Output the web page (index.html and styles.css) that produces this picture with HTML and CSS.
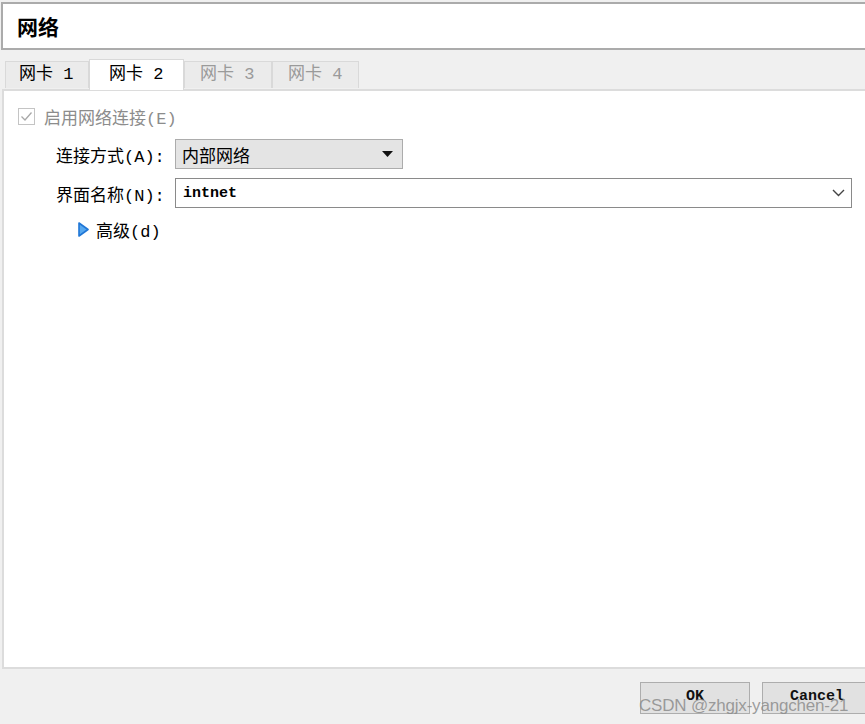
FILE: index.html
```html
<!DOCTYPE html>
<html lang="zh">
<head>
<meta charset="utf-8">
<title>网络</title>
<link rel="stylesheet" href="styles.css">
</head>
<body>
<div class="window">
  <div class="title">网络</div>
  <div class="tabs">
    <div class="tab">网卡 1</div>
    <div class="tab active">网卡 2</div>
    <div class="tab disabled">网卡 3</div>
    <div class="tab disabled">网卡 4</div>
  </div>
  <div class="panel">
    <div class="check-row">
      <span class="checkbox">
        <svg width="17" height="17" viewBox="0 0 17 17"><rect x="0.5" y="0.5" width="16" height="16" fill="#fff" stroke="#c4c4c4"/><path d="M3.5 8.5 L7 12 L13.5 4.5" fill="none" stroke="#a8a8a8" stroke-width="1.3"/></svg>
      </span>
      <span class="check-label">启用网络连接(E)</span>
    </div>
    <div class="form">
      <label class="lbl">连接方式(A):</label>
      <div class="combo">
        <span class="combo-text">内部网络</span>
        <svg class="combo-arrow" width="11" height="6" viewBox="0 0 11 6"><path d="M0 0 H11 L5.5 6 Z" fill="#111"/></svg>
      </div>
      <label class="lbl">界面名称(N):</label>
      <div class="input">
        <span class="input-text">intnet</span>
        <svg class="chev" width="13" height="8" viewBox="0 0 13 8"><path d="M1 1 L6.5 6.5 L12 1" fill="none" stroke="#444" stroke-width="1.4"/></svg>
      </div>
    </div>
    <div class="advanced">
      <svg width="11" height="15" viewBox="0 0 11 15"><path d="M1 1 L10 7.5 L1 14 Z" fill="#56a8f0" stroke="#1f76d6" stroke-width="1.6" stroke-linejoin="round"/></svg>
      <span class="adv-text">高级(d)</span>
    </div>
  </div>
  <div class="footer">
    <button class="btn">OK</button>
    <button class="btn last">Cancel</button>
  </div>
  <div class="watermark">CSDN @zhgjx-yangchen-21</div>
</div>
</body>
</html>
```
FILE: styles.css
```css
html, body {
  margin: 0;
  padding: 0;
  background: #f0f0f0;
  overflow: hidden;
}
.window {
  position: relative;
  width: 865px;
  height: 724px;
  font-family: "Liberation Mono", "Noto Sans CJK SC", monospace;
  color: #000;
}
.title {
  margin-top: 2px;
  margin-left: 1px;
  margin-right: -6px;
  height: 44px;
  border: 2px solid #ababab;
  background: #fff;
  display: flex;
  align-items: center;
  padding-left: 14px;
  font-family: "Noto Sans CJK SC", sans-serif;
  font-weight: bold;
  font-size: 21px;
}
.tabs {
  display: flex;
  align-items: flex-end;
  margin-top: 9px;
  padding-left: 5px;
  height: 30px;
  position: relative;
  z-index: 1;
}
.tab {
  box-sizing: border-box;
  height: 27px;
  width: 84px;
  border: 1px solid #d9d9d9;
  border-bottom: none;
  background: #ebebeb;
  font-size: 17px;
  line-height: 26px;
  padding-left: 13px;
  margin-bottom: 1px;
}
.tab.active {
  width: 95px;
  height: 31px;
  background: #fff;
  margin-bottom: -1px;
  line-height: 29px;
  padding-left: 19px;
  padding-bottom: 2px;
}
.tab.disabled {
  color: #9a9a9a;
  width: 88px;
  padding-left: 15px;
}
.tab.disabled + .tab.disabled {
  width: 87px;
}
.panel {
  box-sizing: border-box;
  margin-left: 2px;
  margin-right: -6px;
  height: 580px;
  background: #fff;
  border: 2px solid #dcdcdc;
  padding: 16px 0 0 14px;
}
.check-row {
  display: flex;
  align-items: center;
  height: 18px;
}
.checkbox {
  display: flex;
  width: 17px;
  height: 17px;
}
.check-label {
  margin-left: 9px;
  color: #8c8c8c;
  font-size: 17px;
}
.form {
  margin-top: 14px;
  margin-left: 38px;
  width: 796px;
  display: grid;
  grid-template-columns: 119px 1fr;
  row-gap: 9px;
  align-items: center;
}
.lbl {
  font-size: 17px;
}
.combo {
  box-sizing: border-box;
  width: 228px;
  height: 30px;
  border: 1px solid #acacac;
  background: #e4e4e4;
  display: flex;
  align-items: center;
  justify-content: space-between;
  padding: 0 9px 0 6px;
}
.combo-text {
  font-family: "Noto Sans CJK SC", sans-serif;
  font-size: 17px;
}
.input {
  box-sizing: border-box;
  height: 30px;
  border: 1px solid #8a8a8a;
  background: #fff;
  display: flex;
  align-items: center;
  justify-content: space-between;
  padding: 0 6px 0 7px;
}
.input-text {
  font-family: "Liberation Mono", monospace;
  font-weight: bold;
  font-size: 15px;
}
.advanced {
  margin-top: 11px;
  margin-left: 60px;
  display: flex;
  align-items: center;
  height: 20px;
}
.adv-text {
  margin-left: 7px;
  font-size: 17px;
}
.footer {
  display: flex;
  justify-content: flex-end;
  gap: 12px;
  margin-top: 13px;
  margin-right: -7px;
}
.btn {
  box-sizing: border-box;
  width: 110px;
  height: 32px;
  border: 1px solid #adadad;
  background: #e1e1e1;
  font-family: "Liberation Mono", monospace;
  font-weight: bold;
  font-size: 15px;
  padding: 0 0 4px 0;
  color: #111;
}
.watermark {
  position: absolute;
  left: 639px;
  top: 694px;
  font-family: "Liberation Sans", sans-serif;
  font-size: 17px;
  color: rgba(140, 140, 140, 0.85);
  letter-spacing: -0.2px;
}
```
